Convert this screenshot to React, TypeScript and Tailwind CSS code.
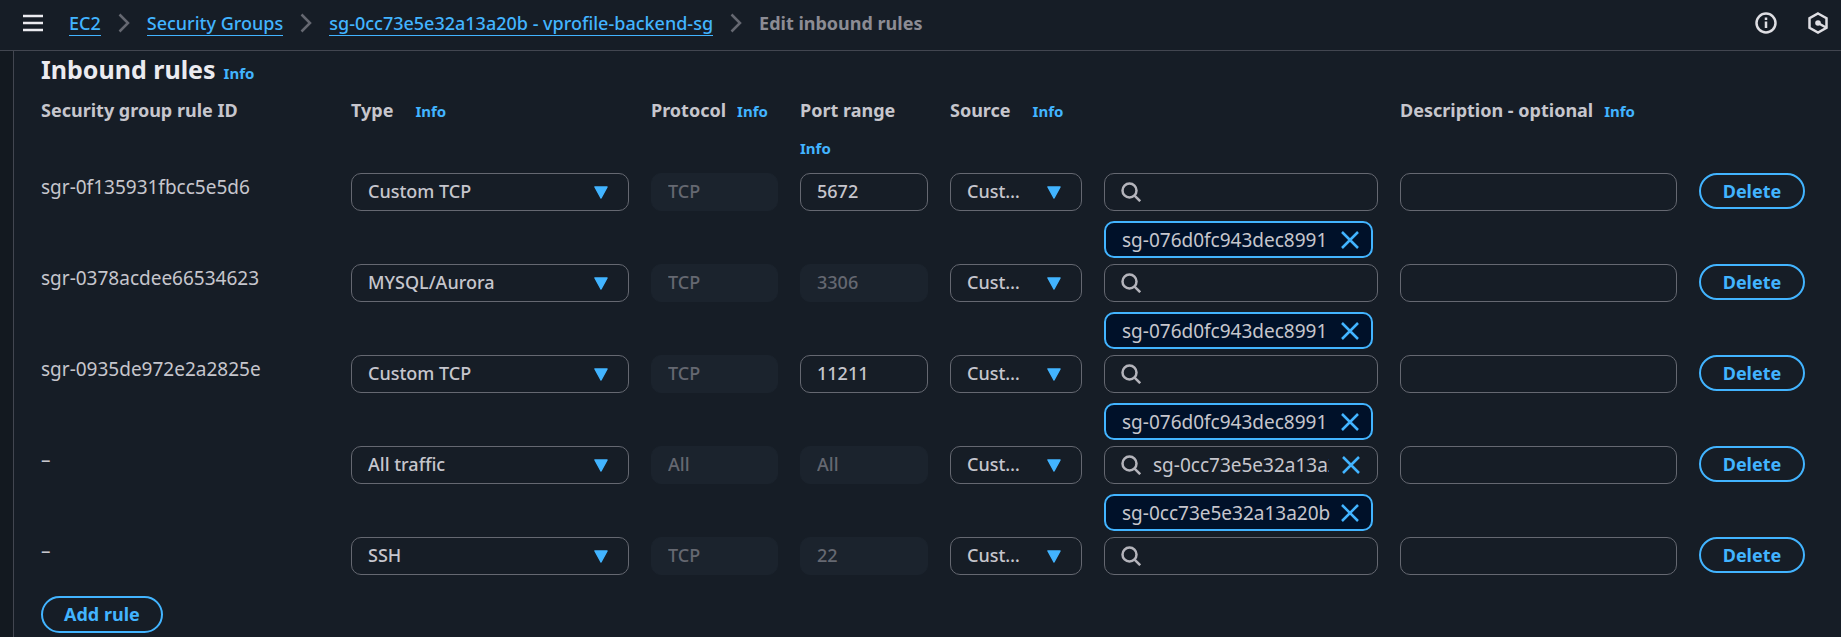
import { ReactNode } from "react";

type Rule = {
  id: string;
  type: string;
  protocol: string;
  port: string;
  portEditable?: boolean;
  search?: string;
  token?: string;
};

const rules: Rule[] = [
  { id: "sgr-0f135931fbcc5e5d6", type: "Custom TCP", protocol: "TCP", port: "5672", portEditable: true, token: "sg-076d0fc943dec8991" },
  { id: "sgr-0378acdee66534623", type: "MYSQL/Aurora", protocol: "TCP", port: "3306", token: "sg-076d0fc943dec8991" },
  { id: "sgr-0935de972e2a2825e", type: "Custom TCP", protocol: "TCP", port: "11211", portEditable: true, token: "sg-076d0fc943dec8991" },
  { id: "–", type: "All traffic", protocol: "All", port: "All", search: "sg-0cc73e5e32a13a20b", token: "sg-0cc73e5e32a13a20b" },
  { id: "–", type: "SSH", protocol: "TCP", port: "22" },
];

const columns =
  "grid items-start gap-x-[22px] grid-cols-[minmax(0,288fr)_minmax(0,278fr)_minmax(0,127fr)_minmax(0,128fr)_minmax(0,132fr)_minmax(0,274fr)_minmax(0,277fr)_minmax(106px,106fr)]";

const field = "h-[38px] w-full rounded-[10px] px-4 pb-0.5 text-lg outline-none";
const outlined = "border border-[#656871] bg-[#161d26] text-[#c6c6cd]";
const disabled = "border border-[#1b232d] bg-[#1b232d] text-[#656871]";
const identifier = "text-[19px] font-normal leading-7";

function InfoLink() {
  return (
    <a href="#info" className="text-[15px] font-bold leading-6 text-[#42b4ff]">
      Info
    </a>
  );
}

function Chevron() {
  return (
    <svg viewBox="0 0 12 20" className="h-5 w-3 shrink-0" fill="none" stroke="#656871" strokeWidth="2.5" aria-hidden="true">
      <path d="M1.5 1.5 L10 10 L1.5 18.5" />
    </svg>
  );
}

function Cross() {
  return (
    <svg viewBox="0 0 20 20" className="size-5" fill="none" stroke="#42b4ff" strokeWidth="2.5" aria-hidden="true">
      <path d="M2 2 L18 18 M18 2 L2 18" />
    </svg>
  );
}

function Dropdown({ label, value }: { label: string; value: string }) {
  return (
    <div className="relative">
      <select aria-label={label} defaultValue={value} className={`${field} ${outlined} appearance-none truncate pr-[52px]`}>
        <option>{value}</option>
      </select>
      <svg viewBox="0 0 14 13" className="pointer-events-none absolute right-[21px] top-[13px] h-[13px] w-3.5" fill="#42b4ff" stroke="#42b4ff" strokeWidth="1.5" strokeLinejoin="round" aria-hidden="true">
        <path d="M1 1 H13 L7 12 Z" />
      </svg>
    </div>
  );
}

function SourceSearch({ value, label }: { value?: string; label: string }) {
  return (
    <div className={`flex h-[38px] items-center rounded-[10px] px-4 ${outlined}`}>
      <svg viewBox="0 0 20 20" className="size-5 shrink-0" fill="none" stroke="#b4b4bb" strokeWidth="2.5" aria-hidden="true">
        <circle cx="8.5" cy="8.5" r="7" />
        <path d="M13.3 13.3 L19.2 19.2" />
      </svg>
      <input aria-label={label} defaultValue={value} className={`ml-3 min-w-0 flex-1 bg-transparent outline-none ${identifier}`} />
      {value && (
        <button aria-label="Clear search" className="ml-3">
          <Cross />
        </button>
      )}
    </div>
  );
}

function Heading({ children, wide, info = true }: { children?: ReactNode; wide?: boolean; info?: boolean }) {
  return (
    <th scope="col" className={`flex flex-wrap items-baseline gap-y-3 text-left text-lg font-bold leading-[27px] text-[#c6c6cd] ${wide ? "gap-x-[22px]" : "gap-x-[11px]"}`}>
      {children}
      {info && <InfoLink />}
    </th>
  );
}

export default function App() {
  return (
    <div className="flex min-h-screen flex-col bg-[#161d26] font-['Noto_Sans',sans-serif] text-lg font-medium text-[#c6c6cd]">
      <header className="flex h-[51px] items-center border-b border-[#424650] pb-1 pl-[23px] pr-3">
        <button aria-label="Open navigation" className="mr-[26px]">
          <svg viewBox="0 0 20 18" className="h-[18px] w-5" stroke="#ebebf0" strokeWidth="2.5" aria-hidden="true">
            <path d="M0 2 H20 M0 9 H20 M0 16 H20" />
          </svg>
        </button>
        <nav aria-label="Breadcrumb" className="flex flex-1 items-center gap-[17px] leading-6">
          <a href="#ec2" className="border-b border-[#42b4ff] text-[#42b4ff]">EC2</a>
          <Chevron />
          <a href="#groups" className="border-b border-[#42b4ff] text-[#42b4ff]">Security Groups</a>
          <Chevron />
          <a href="#group" className="border-b border-[#42b4ff] text-[#42b4ff]">sg-0cc73e5e32a13a20b - vprofile-backend-sg</a>
          <Chevron />
          <span className="font-bold text-[#8c8c94]">Edit inbound rules</span>
        </nav>
        <div className="flex items-center gap-[30px]">
          <button aria-label="Info panel">
            <svg viewBox="0 0 22 22" className="size-[22px]" fill="none" stroke="#dedee3" strokeWidth="2.5" aria-hidden="true">
              <circle cx="11" cy="11" r="9.5" />
              <path d="M11 9.5 V16 M11 5.5 V8" />
            </svg>
          </button>
          <button aria-label="Assistant">
            <svg viewBox="0 0 22 22" className="size-[22px]" fill="none" stroke="#dedee3" strokeWidth="2.5" aria-hidden="true">
              <path d="M11 1.5 L19.5 6.2 V15.8 L11 20.5 L2.5 15.8 V6.2 Z" />
              <circle cx="11" cy="11" r="2.8" fill="#dedee3" stroke="none" />
              <path d="M11 11 L19 15.5" />
            </svg>
          </button>
        </div>
      </header>

      <div className="flex flex-1 bg-[#131920] pl-[13px]">
        <main className="flex-1 border-l border-[#424650] bg-[#161d26] pb-[3px] pl-[27px] pr-9">
          <div className="flex items-baseline gap-2 pt-[2px]">
            <h1 className="text-[25px] font-bold leading-8 text-[#ebebf0]">Inbound rules</h1>
            <InfoLink />
          </div>
          <table className="mt-3 block">
            <thead className="block">
              <tr className={`${columns} h-[76px]`}>
                <Heading info={false}>Security group rule ID</Heading>
                <Heading wide>Type</Heading>
                <Heading>Protocol</Heading>
                <Heading>Port range</Heading>
                <Heading wide>Source</Heading>
                <td />
                <Heading>Description - optional</Heading>
                <td />
              </tr>
            </thead>
            <tbody className="block">
              {rules.map((rule, i) => (
                <tr key={i} className={`${columns} ${i < rules.length - 1 ? "h-[91px]" : "h-[59px]"}`}>
                  <td className={identifier}>{rule.id}</td>
                  <td>
                    <Dropdown label="Type" value={rule.type} />
                  </td>
                  <td>
                    <input aria-label="Protocol" disabled defaultValue={rule.protocol} className={`${field} ${disabled}`} />
                  </td>
                  <td>
                    <input aria-label="Port range" disabled={!rule.portEditable} defaultValue={rule.port} className={`${field} ${rule.portEditable ? outlined : disabled}`} />
                  </td>
                  <td>
                    <Dropdown label="Source" value="Custom" />
                  </td>
                  <td>
                    <SourceSearch label="Source search" value={rule.search} />
                    {rule.token && (
                      <div className="mr-[5px] mt-[10px] flex h-[37px] items-center justify-between rounded-[10px] border-2 border-[#42b4ff] bg-[#001129] pl-4 pr-[11px]">
                        <span className={`truncate ${identifier}`}>{rule.token}</span>
                        <button aria-label={`Remove ${rule.token}`}>
                          <Cross />
                        </button>
                      </div>
                    )}
                  </td>
                  <td>
                    <input aria-label="Description" className={`${field} ${outlined}`} />
                  </td>
                  <td>
                    <button className="h-9 w-full rounded-full border-2 border-[#42b4ff] font-bold text-[#42b4ff]">Delete</button>
                  </td>
                </tr>
              ))}
            </tbody>
          </table>
          <button className="h-[37px] rounded-full border-2 border-[#42b4ff] px-[21px] pb-0.5 font-bold text-[#42b4ff]">Add rule</button>
        </main>
      </div>
    </div>
  );
}
